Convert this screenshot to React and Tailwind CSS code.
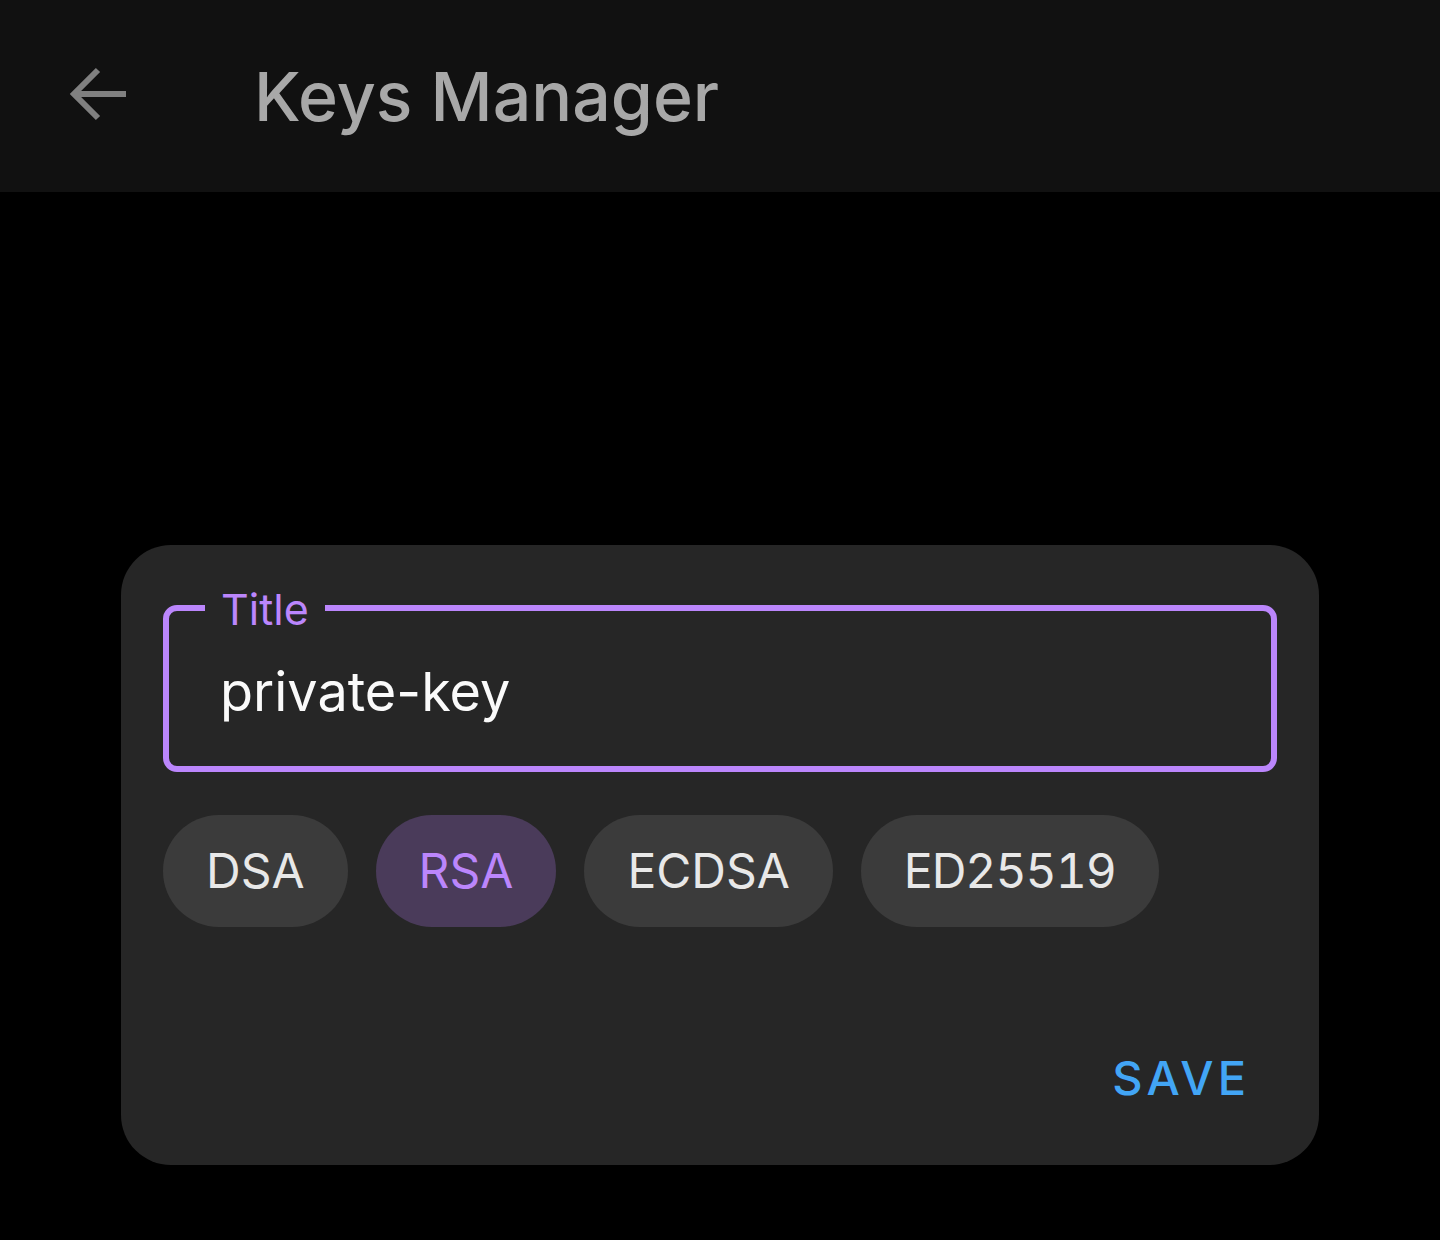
import React, { useState } from "react";

const ALGOS = ["DSA", "RSA", "ECDSA", "ED25519"];

const BackArrow = () => (
  <svg width="60" height="60" viewBox="0 0 60 60" fill="none" className="block">
    <path d="M58 29H7" stroke="#808080" strokeWidth="6" />
    <path d="M30 5L6 29L30 53" stroke="#808080" strokeWidth="6" strokeLinejoin="miter" />
  </svg>
);

const chipClass = (active, numeric) => {
  const base = "h-[112px] px-[43px] rounded-full text-[48px] leading-none";
  const tone = active ? " bg-[#4a3b5a] text-[#bb86fc]" : " bg-[#3b3b3b] text-[#e8e8e8]";
  return base + tone + (numeric ? " tabular-nums tracking-[-1px]" : "");
};

const App = () => {
  const [algo, setAlgo] = useState("RSA");
  const [title, setTitle] = useState("private-key");

  return (
    <div className="min-h-screen bg-black" style={{ fontFamily: "Inter, 'Noto Sans', sans-serif" }}>
      <header className="h-[192px] bg-[#111111] flex items-center">
        <button className="ml-[68px] mt-[-2px]">
          <BackArrow />
        </button>
        <h1 className="ml-[126px] text-[68px] leading-[70px] font-medium text-[#a8a8a8]">Keys Manager</h1>
      </header>

      <div className="mx-[121px] mt-[353px] rounded-[50px] bg-[#262626] px-[42px] pt-[41px] pb-[59px]">
        <fieldset className="border-[6px] border-[#bb86fc] rounded-[14px] pl-[36px] pr-[36px] pt-[30px] pb-[41px] m-0">
          <legend className="px-[16px] text-[43px] leading-[43px] text-[#bb86fc]">
            <span className="relative top-[2px]">Title</span>
          </legend>
          <input
            value={title}
            onChange={(e) => setTitle(e.target.value)}
            className="block w-full bg-transparent outline-none pl-[15px] text-[54px] leading-[66px] h-[66px] text-[#fafafa]"
          />
        </fieldset>

        <div className="flex gap-[28px] mt-[43px]">
          {ALGOS.map((a) => (
            <button key={a} onClick={() => setAlgo(a)} className={chipClass(a === algo, a === "ED25519")}>
              {a}
            </button>
          ))}
        </div>

        <div className="flex justify-end mt-[123px]">
          <button className="mr-[27px] text-[47px] leading-[56px] font-medium tracking-[4px] text-[#42a5f5]">SAVE</button>
        </div>
      </div>
    </div>
  );
};

export default App;
